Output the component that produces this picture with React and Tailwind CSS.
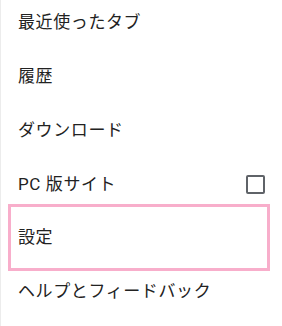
const items = [
  { label: "最近使ったタブ" },
  { label: "履歴" },
  { label: "ダウンロード" },
  { label: "PC 版サイト", checkbox: true },
  { label: "設定", focused: true },
  { label: "ヘルプとフィードバック" },
];

const App = () => {
  return (
    <div
      className="w-[282px] h-[326px] overflow-hidden bg-white border-l border-[#ececec]"
      style={{ fontFamily: 'Roboto, "Noto Sans CJK JP", sans-serif' }}
    >
      <div className="-mt-[4px]">
        {items.map((item) => (
          <div
            key={item.label}
            className="relative flex items-center h-[53.8px] pl-[17px] pr-[17px] text-[17px] tracking-[0.6px] text-[#222]"
          >
            <span className="flex-1">{item.label}</span>
            {item.checkbox && (
              <span className="w-[19px] h-[19px] border-2 border-[#5f6368] rounded-[2px]"></span>
            )}
            {item.focused && (
              <div className="absolute left-[7px] right-[12px] top-[-7px] bottom-[-6px] border-[3px] border-[#f8aecb]"></div>
            )}
          </div>
        ))}
      </div>
    </div>
  );
};

export default App;
